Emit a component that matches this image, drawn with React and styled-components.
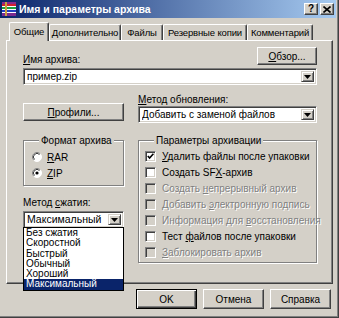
import styled, { createGlobalStyle } from "styled-components";

const GlobalStyle = createGlobalStyle`
    body {
        margin: 0;
        background: #d4d0c8;
    }
`;

const Window = styled.div`
    width: 339px;
    height: 318px;
    box-sizing: border-box;
    background: #d4d0c8;
    border-right: 1px solid #404040;
    border-bottom: 1px solid #404040;
    box-shadow: inset -1px -1px #808080;
    padding: 0 2px 2px 0;
    display: flex;
    flex-direction: column;
    font-family: "Liberation Sans", Arial, sans-serif;
    font-size: 10px;
    color: #000;
`;

const TitleBar = styled.div`
    height: 18px;
    display: flex;
    align-items: center;
    padding: 0 2px 0 2px;
    background: linear-gradient(to right, #0a246a, #a6caf0);
    color: #fff;
    font-weight: bold;
    font-size: 10.5px;
`;

const TitleText = styled.div`
    flex: 1;
    margin-left: 3px;
    white-space: nowrap;
`;

const CaptionButton = styled.div`
    width: 14px;
    height: 12px;
    box-sizing: border-box;
    margin-left: ${p => p.gap || 0}px;
    background: #d4d0c8;
    border: 1px solid;
    border-color: #fff #404040 #404040 #fff;
    box-shadow: inset -1px -1px #808080;
    display: flex;
    align-items: center;
    justify-content: center;
    color: #000;
    font-size: 10px;
    font-weight: bold;
    line-height: 1;
`;

const TabStrip = styled.div`
    height: 18px;
    margin-top: 4px;
    padding-left: 9px;
    display: flex;
    align-items: flex-end;
`;

const Tab = styled.div`
    width: ${p => p.width}px;
    height: ${p => (p.active ? 19 : 16)}px;
    margin-bottom: ${p => (p.active ? -1 : 0)}px;
    box-sizing: border-box;
    position: relative;
    z-index: ${p => (p.active ? 2 : 0)};
    background: #d4d0c8;
    border-top: 1px solid #fff;
    border-left: 1px solid #fff;
    border-right: 1px solid #404040;
    border-radius: 2px 2px 0 0;
    box-shadow: inset -1px 0 #808080;
    display: flex;
    align-items: center;
    justify-content: center;
    padding-bottom: ${p => (p.active ? 2 : 0)}px;
    font-size: 9.5px;
    letter-spacing: -0.15px;
    white-space: nowrap;
`;

const Panel = styled.div`
    position: relative;
    margin-left: 6px;
    width: 327px;
    height: 244px;
    box-sizing: border-box;
    border-top: 1px solid #fff;
    border-left: 1px solid #fff;
    border-right: 1px solid #404040;
    border-bottom: 1px solid #404040;
    box-shadow: inset -1px -1px #808080;
    padding: 6px 15px 0 16px;
`;

const LabelRow = styled.div`
    height: 18px;
    display: flex;
    justify-content: space-between;
    align-items: flex-end;
`;

const Label = styled.div`
    line-height: 11px;
    height: 11px;
    white-space: nowrap;
    margin-top: ${p => p.mt || 0}px;
    margin-bottom: ${p => p.mb || 0}px;
`;

const Button = styled.button`
    width: ${p => p.width || 61}px;
    height: ${p => p.height || 18}px;
    box-sizing: border-box;
    margin: 0;
    padding: 0;
    background: #d4d0c8;
    border: 1px solid;
    border-color: #fff #404040 #404040 #fff;
    box-shadow: inset -1px -1px #808080;
    font-family: "Liberation Sans", Arial, sans-serif;
    font-size: 10px;
    color: #000;
    align-self: ${p => p.align || "auto"};
    margin-bottom: ${p => p.mb || 0}px;
`;

const DefaultButton = styled(Button)`
    border: 1px solid #000;
    box-shadow: inset 1px 1px #fff, inset -1px -1px #404040, inset -2px -2px #808080;
`;

const ComboBox = styled.div`
    position: relative;
    height: 17px;
    box-sizing: border-box;
    margin-top: ${p => p.mt || 0}px;
    background: #fff;
    border: 1px solid;
    border-color: #808080 #fff #fff #808080;
    box-shadow: inset 1px 1px #404040, inset -1px -1px #d4d0c8;
    padding: 2px 2px 2px 3px;
    display: flex;
    align-items: center;
`;

const ComboText = styled.div`
    flex: 1;
    height: 11px;
    line-height: 11px;
    white-space: nowrap;
    overflow: hidden;
    font-size: ${p => p.size || 10}px;
`;

const ArrowButton = styled.div`
    width: 13px;
    height: 11px;
    box-sizing: border-box;
    background: #d4d0c8;
    border: 1px solid;
    border-color: #d4d0c8 #404040 #404040 #d4d0c8;
    box-shadow: inset 1px 1px #fff, inset -1px -1px #808080;
    display: flex;
    align-items: center;
    justify-content: center;
`;

const DropList = styled.div`
    position: absolute;
    left: -1px;
    right: -1px;
    top: 100%;
    z-index: 5;
    background: #fff;
    border: 1px solid #000;
    display: flex;
    flex-direction: column;
`;

const ListItem = styled.div`
    height: 10.3px;
    line-height: 10.3px;
    padding-left: 2px;
    font-size: 10px;
    white-space: nowrap;
    overflow: hidden;
    background: ${p => (p.selected ? "#0a246a" : "transparent")};
    color: ${p => (p.selected ? "#fff" : "#000")};
`;

const TwoCols = styled.div`
    display: grid;
    grid-template-columns: 101px 1fr;
    column-gap: 14px;
    align-items: start;
    margin-top: ${p => p.mt || 0}px;
`;

const Column = styled.div`
    display: flex;
    flex-direction: column;
`;

const GroupBox = styled.fieldset`
    margin: 0;
    min-width: 0;
    border: 1px solid #808080;
    box-shadow: inset 1px 1px #fff, 1px 1px #fff;
    padding: ${p => p.pad};
    display: flex;
    flex-direction: column;
`;

const Legend = styled.legend`
    padding: 0 2px;
    margin-left: ${p => p.ml || 7}px;
    line-height: 11px;
    background: #d4d0c8;
    position: relative;
    white-space: nowrap;
`;

const OptionRow = styled.div`
    height: 16px;
    display: flex;
    align-items: center;
    gap: ${p => p.gap || 5}px;
    white-space: nowrap;
    color: ${p => (p.disabled ? "#808080" : "#000")};
    text-shadow: ${p => (p.disabled ? "1px 1px 0 #fff" : "none")};
`;

const CheckBox = styled.div`
    width: 11px;
    height: 11px;
    flex: none;
    box-sizing: border-box;
    border: 1px solid;
    border-color: #808080 #fff #fff #808080;
    box-shadow: inset 1px 1px #404040, inset -1px -1px #d4d0c8;
    background: ${p => (p.disabled ? "#d4d0c8" : "#fff")};
    display: flex;
    align-items: center;
    justify-content: center;
`;

const Footer = styled.div`
    margin-top: 5px;
    padding-right: 5px;
    display: flex;
    justify-content: flex-end;
    gap: 6px;
`;

const RarIcon = () => (
    <svg width="14" height="14" viewBox="0 0 14 14">
        <rect x="0" y="0" width="14" height="2" fill="#8a2a8a" />
        <rect x="0" y="2" width="14" height="2" fill="#d02030" />
        <rect x="0" y="4" width="14" height="1" fill="#fff" />
        <rect x="0" y="5" width="14" height="2" fill="#20a040" />
        <rect x="0" y="7" width="14" height="1" fill="#fff" />
        <rect x="0" y="8" width="14" height="2" fill="#2040c0" />
        <rect x="0" y="10" width="14" height="1" fill="#fff" />
        <rect x="0" y="11" width="14" height="3" fill="#7a2a90" />
        <rect x="3" y="0" width="2" height="14" fill="#c8a040" />
    </svg>
);

const CloseGlyph = () => (
    <svg width="8" height="7" viewBox="0 0 8 7">
        <path d="M0.5 0.5 L7.5 6.5 M7.5 0.5 L0.5 6.5" stroke="#000" strokeWidth="1.6" />
    </svg>
);

const Arrow = () => (
    <svg width="7" height="4" viewBox="0 0 7 4">
        <path d="M0 0 H7 L3.5 4 Z" fill="#000" />
    </svg>
);

const CheckMark = () => (
    <svg width="7" height="7" viewBox="0 0 7 7">
        <path d="M0.8 3 L2.6 5 L6.4 0.8" fill="none" stroke="#000" strokeWidth="1.6" />
    </svg>
);

const Radio = ({ checked }) => (
    <svg width="10" height="10" viewBox="0 0 10 10" style={{ flex: "none" }}>
        <circle cx="5" cy="5" r="4.5" fill="#fff" />
        <path d="M1.8 8.2 A4.5 4.5 0 0 1 8.2 1.8" fill="none" stroke="#808080" strokeWidth="1" />
        <path d="M8.2 1.8 A4.5 4.5 0 0 1 1.8 8.2" fill="none" stroke="#fff" strokeWidth="1" />
        <path d="M2.5 7.5 A3.5 3.5 0 0 1 7.5 2.5" fill="none" stroke="#404040" strokeWidth="1" />
        {checked && <circle cx="5" cy="5" r="1.6" fill="#000" />}
    </svg>
);

const Combo = ({ value, mt, size, children }) => (
    <ComboBox mt={mt}>
        <ComboText size={size}>{value}</ComboText>
        <ArrowButton>
            <Arrow />
        </ArrowButton>
        {children}
    </ComboBox>
);

const Check = ({ checked, disabled, children }) => (
    <OptionRow disabled={disabled} gap={6}>
        <CheckBox disabled={disabled}>{checked && <CheckMark />}</CheckBox>
        <span>{children}</span>
    </OptionRow>
);

const tabs = [
    ["Общие", 40],
    ["Дополнительно", 72],
    ["Файлы", 42],
    ["Резервные копии", 84],
    ["Комментарий", 66]
];

const methods = ["Без сжатия", "Скоростной", "Быстрый", "Обычный", "Хороший", "Максимальный"];

export default function App() {
    return (
        <Window>
            <GlobalStyle />
            <TitleBar>
                <RarIcon />
                <TitleText>Имя и параметры архива</TitleText>
                <CaptionButton>?</CaptionButton>
                <CaptionButton gap={2}>
                    <CloseGlyph />
                </CaptionButton>
            </TitleBar>

            <TabStrip>
                {tabs.map(([name, width], i) => (
                    <Tab key={name} width={width} active={i === 0}>
                        {name}
                    </Tab>
                ))}
            </TabStrip>

            <Panel>
                <LabelRow>
                    <Label>
                        <u>И</u>мя архива:
                    </Label>
                    <Button width={60}>
                        <u>О</u>бзор...
                    </Button>
                </LabelRow>
                <Combo value="пример.zip" mt={3} />

                <TwoCols mt={9}>
                    <Button width={101} align="end" mb={2}>
                        <u>П</u>рофили...
                    </Button>
                    <Column>
                        <Label mb={1}>
                            <u>М</u>етод обновления:
                        </Label>
                        <Combo value="Добавить с заменой файлов" />
                    </Column>
                </TwoCols>

                <TwoCols mt={12}>
                    <Column>
                        <GroupBox pad="3px 0 4px 8px">
                            <Legend ml={7}>Формат архива</Legend>
                            <OptionRow>
                                <Radio />
                                <span>
                                    <u>R</u>AR
                                </span>
                            </OptionRow>
                            <OptionRow>
                                <Radio checked />
                                <span>
                                    <u>Z</u>IP
                                </span>
                            </OptionRow>
                        </GroupBox>
                        <Label mt={11}>
                            Метод <u>с</u>жатия:
                        </Label>
                        <Combo value="Максимальный" mt={3} size={10.5}>
                            <DropList>
                                {methods.map(m => (
                                    <ListItem key={m} selected={m === "Максимальный"}>
                                        {m}
                                    </ListItem>
                                ))}
                            </DropList>
                        </Combo>
                    </Column>

                    <GroupBox pad="2px 0 2px 6px">
                        <Legend ml={9}>Параметры архивации</Legend>
                        <Check checked>
                            <u>У</u>далить файлы после упаковки
                        </Check>
                        <Check>
                            Создать SF<u>X</u>-архив
                        </Check>
                        <Check disabled>
                            Создать <u>н</u>епрерывный архив
                        </Check>
                        <Check disabled>
                            Добавить <u>э</u>лектронную подпись
                        </Check>
                        <Check disabled>
                            Информация для <u>в</u>осстановления
                        </Check>
                        <Check>
                            Тест <u>ф</u>айлов после упаковки
                        </Check>
                        <Check disabled>
                            <u>З</u>аблокировать архив
                        </Check>
                    </GroupBox>
                </TwoCols>
            </Panel>

            <Footer>
                <DefaultButton height={20}>OK</DefaultButton>
                <Button height={20}>Отмена</Button>
                <Button height={20}>Справка</Button>
            </Footer>
        </Window>
    );
}
